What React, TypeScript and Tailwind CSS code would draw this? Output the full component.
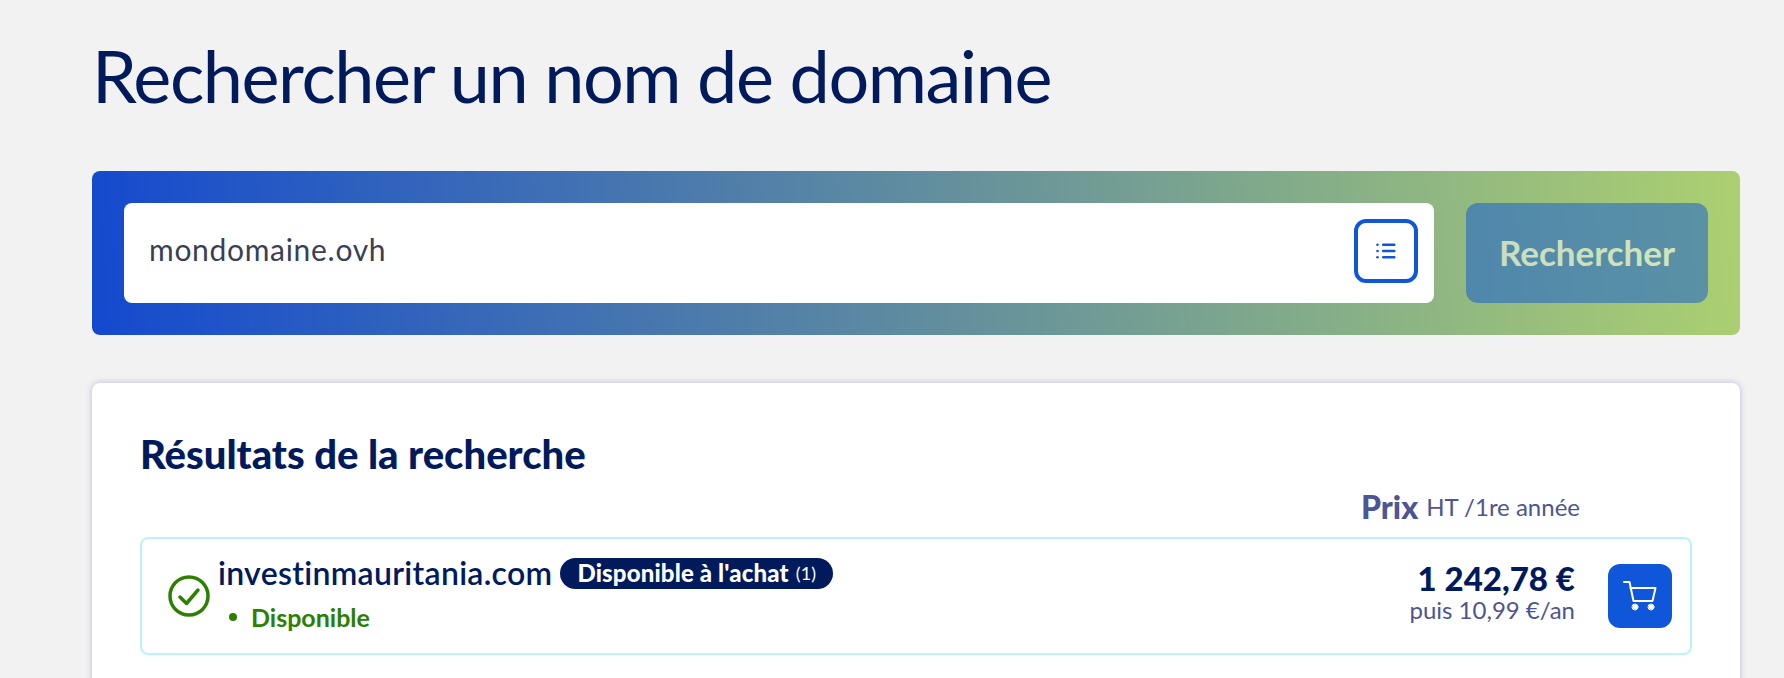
import React from "react";

const font = { fontFamily: '"Lato", "Noto Sans", sans-serif' };

const ListIcon = () => (
  <svg width="20" height="16" viewBox="0 0 20 16" fill="#0f57d8">
    <circle cx="1.5" cy="1.8" r="1.3" />
    <circle cx="1.5" cy="8" r="1.3" />
    <circle cx="1.5" cy="14.2" r="1.3" />
    <rect x="6" y="0.6" width="13.5" height="2.4" rx="1" />
    <rect x="6" y="6.8" width="13.5" height="2.4" rx="1" />
    <rect x="6" y="13" width="13.5" height="2.4" rx="1" />
  </svg>
);

const CartIcon = () => (
  <svg width="34" height="30" viewBox="0 0 34 30" fill="none" stroke="#fff" strokeWidth="2" strokeLinecap="round" strokeLinejoin="round">
    <path d="M1 1h5.5l4 19h18" />
    <path d="M7.5 7h25l-3 13" />
    <circle cx="12" cy="26" r="2.4" fill="#fff" stroke="none" />
    <circle cx="28" cy="26" r="2.4" fill="#fff" stroke="none" />
    <circle cx="12" cy="26" r="3" strokeWidth="1" />
    <circle cx="28" cy="26" r="3" strokeWidth="1" />
  </svg>
);

const CheckIcon = () => (
  <svg width="42" height="42" viewBox="0 0 42 42" fill="none" stroke="#2b8000" strokeWidth="3.5" strokeLinecap="round" strokeLinejoin="round">
    <circle cx="21" cy="21" r="19" />
    <path d="M12 22l6.5 6.5L30 15" />
  </svg>
);

export default function App() {
  return (
    <div className="h-screen overflow-hidden bg-[#f2f2f2] pl-[92px] pr-[44px]" style={font}>
      <h1 className="h-[171px] pt-[33px] text-[72px] leading-[84px] tracking-[-1.45px] text-[#001a5c]">
        Rechercher un nom de domaine
      </h1>

      {/* Search bar */}
      <div className="flex h-[164px] gap-[32px] rounded-lg bg-[linear-gradient(85deg,#1449cf_0%,#acd070_100%)] p-[32px]">
        <div className="flex flex-1 items-center justify-between rounded-lg bg-white pb-[4px] pl-[25px] pr-[16px]">
          <span className="pb-[4px] text-[30px] tracking-[0.7px] text-[#3a3f55]">mondomaine.ovh</span>
          <button className="flex h-[64px] w-[64px] items-center justify-center rounded-xl border-4 border-[#0f57d8] bg-white">
            <ListIcon />
          </button>
        </div>
        <button className="w-[242px] rounded-xl bg-[#0f57d8] pb-[2px] text-[35px] font-bold text-white opacity-50">
          Rechercher
        </button>
      </div>

      {/* Results */}
      <div className="mt-[48px] rounded-lg bg-white px-[48px] pb-[48px] pt-[46px] shadow-[0_0_6px_rgba(0,14,156,0.25)]">
        <h2 className="text-[40px] font-black leading-[50px] text-[#001a5c]">Résultats de la recherche</h2>
        <div className="mt-[11px] flex h-[34px] items-center justify-end pr-[112px] text-[#4d5592]">
          <span className="text-[32px] font-black">Prix</span>
          <span className="ml-[8px] text-[24px]">HT /1re année</span>
        </div>
        <div className="mt-[13px] flex h-[118px] items-center rounded-lg border-2 border-[#bef1ff] pl-[26px] pr-[18px]">
          <CheckIcon />
          <div className="ml-[8px] flex-1 pb-[6px]">
            <div className="flex items-center gap-[8px]">
              <span className="text-[32px] font-semibold leading-[36px] tracking-[0.3px] text-[#001a5c]">investinmauritania.com</span>
              <span className="flex h-[31px] items-center rounded-full bg-[#001a5c] px-[17px] text-[24px] font-black tracking-[0.15px] text-white">
                Disponible à l'achat
                <span className="ml-[7px] text-[18px] font-normal">(1)</span>
              </span>
            </div>
            <div className="mt-[12px] flex items-center pl-[11px] text-[25px] font-bold leading-[28px] text-[#2b8000]">
              <span className="mr-[14px] h-[8px] w-[8px] rounded-full bg-[#2b8000]" />
              Disponible
            </div>
          </div>
          <div className="mr-[33px] pb-[8px] text-right">
            <div className="text-[33px] font-black leading-[36px] text-[#001a5c]">1 242,78 €</div>
            <div className="text-[24px] leading-[28px] text-[#4d5592]">puis 10,99 €/an</div>
          </div>
          <button className="flex h-[64px] w-[64px] items-center justify-center rounded-xl bg-[#0f57d8]">
            <CartIcon />
          </button>
        </div>
      </div>
    </div>
  );
}
